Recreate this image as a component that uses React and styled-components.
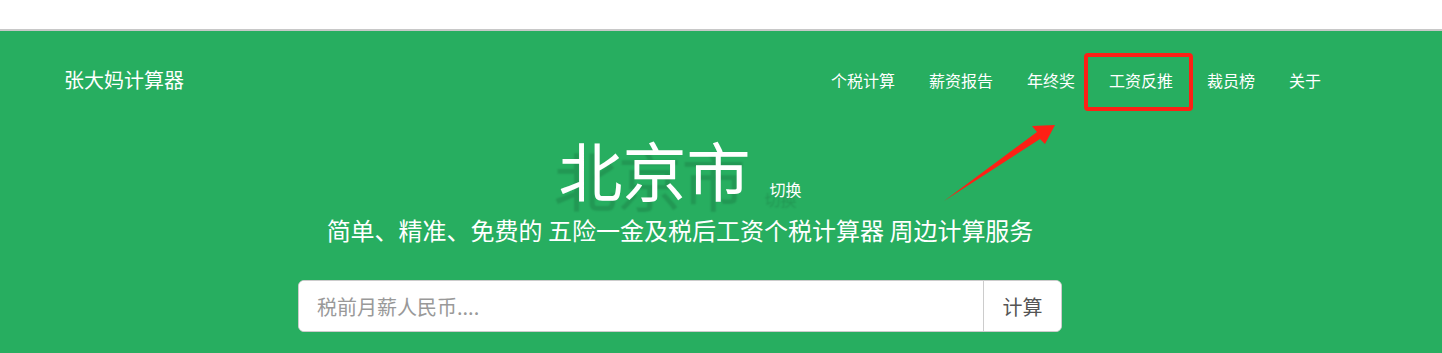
import React from 'react';
import styled, { createGlobalStyle } from 'styled-components';

const GlobalStyle = createGlobalStyle`
  body {
    margin: 0;
    background: #fff;
    font-family: "Noto Sans CJK SC", "Noto Sans", sans-serif;
  }
`;

const navItems = ['个税计算', '薪资报告', '年终奖', '工资反推', '裁员榜', '关于'];

const App = () => (
  <Page>
    <GlobalStyle />
    <TopStrip />
    <Banner>
      <NavBar>
        <Brand>张大妈计算器</Brand>
        <NavList>
          {navItems.map(item => (
            <NavItem key={item} $marked={item === '工资反推'}>{item}</NavItem>
          ))}
        </NavList>
      </NavBar>

      <Hero>
        <TitleRow>
          <City>北京市</City>
          <Switch>切换</Switch>
        </TitleRow>
        <Subtitle>简单、精准、免费的 五险一金及税后工资个税计算器 周边计算服务</Subtitle>
        <SearchGroup>
          <SalaryInput placeholder="税前月薪人民币...." />
          <CalcButton>计算</CalcButton>
        </SearchGroup>
      </Hero>
    </Banner>

    <Arrow width="1442" height="353" viewBox="0 0 1442 353">
      <polygon
        points="944,201 1040,139 1045,144 1055,125 1032,126 1037,132"
        fill="#fe2015"
      />
    </Arrow>
  </Page>
);

export default App;

// Styled Components
const Page = styled.div`
  position: relative;
  width: 1442px;
  height: 353px;
  overflow: hidden;
`;

const TopStrip = styled.div`
  height: 29px;
  background: #fff;
  border-bottom: 2px solid #c8c8c8;
`;

const Banner = styled.div`
  height: 322px;
  background: #27ae60;
  color: #fff;
  overflow: hidden;
`;

const NavBar = styled.div`
  display: flex;
  align-items: center;
  justify-content: space-between;
  height: 40px;
  margin-top: 29px;
  padding: 0 104px 0 64px;
`;

const Brand = styled.div`
  font-size: 20px;
  line-height: 1;
`;

const NavList = styled.div`
  display: flex;
  align-items: center;
`;

const NavItem = styled.div`
  position: relative;
  padding: 0 17px;
  font-size: 16px;
  line-height: 40px;

  ${({ $marked }) => $marked && `
    &::after {
      content: '';
      position: absolute;
      left: -8px;
      right: -3px;
      top: -7px;
      bottom: -11px;
      border: 4px solid #fe2015;
      border-radius: 4px;
    }
  `}
`;

const Hero = styled.div`
  width: 1360px;
  display: flex;
  flex-direction: column;
  align-items: center;
`;

const TitleRow = styled.div`
  display: flex;
  align-items: baseline;
  margin-top: 36px;
  text-shadow: -5px 10px 2px rgba(0, 0, 0, 0.13);
`;

const City = styled.div`
  font-size: 64px;
  line-height: 1;
`;

const Switch = styled.div`
  font-size: 16px;
  margin-left: 19px;
`;

const Subtitle = styled.div`
  font-size: 24px;
  line-height: 34px;
  margin-top: 12px;
`;

const SearchGroup = styled.div`
  display: flex;
  width: 764px;
  height: 52px;
  margin-top: 33px;
  border: 1px solid #ccc;
  border-radius: 6px;
  background: #fff;
  box-sizing: border-box;
  overflow: hidden;
`;

const SalaryInput = styled.input`
  flex: 1;
  border: none;
  outline: none;
  padding: 0 18px;
  font-family: inherit;
  font-size: 20px;
  color: #555;

  &::placeholder {
    color: #999;
  }
`;

const CalcButton = styled.button`
  width: 78px;
  border: none;
  border-left: 1px solid #ccc;
  background: #fff;
  font-family: inherit;
  font-size: 20px;
  color: #555;
  padding: 0;
`;

const Arrow = styled.svg`
  position: absolute;
  top: 0;
  left: 0;
  pointer-events: none;
`;
